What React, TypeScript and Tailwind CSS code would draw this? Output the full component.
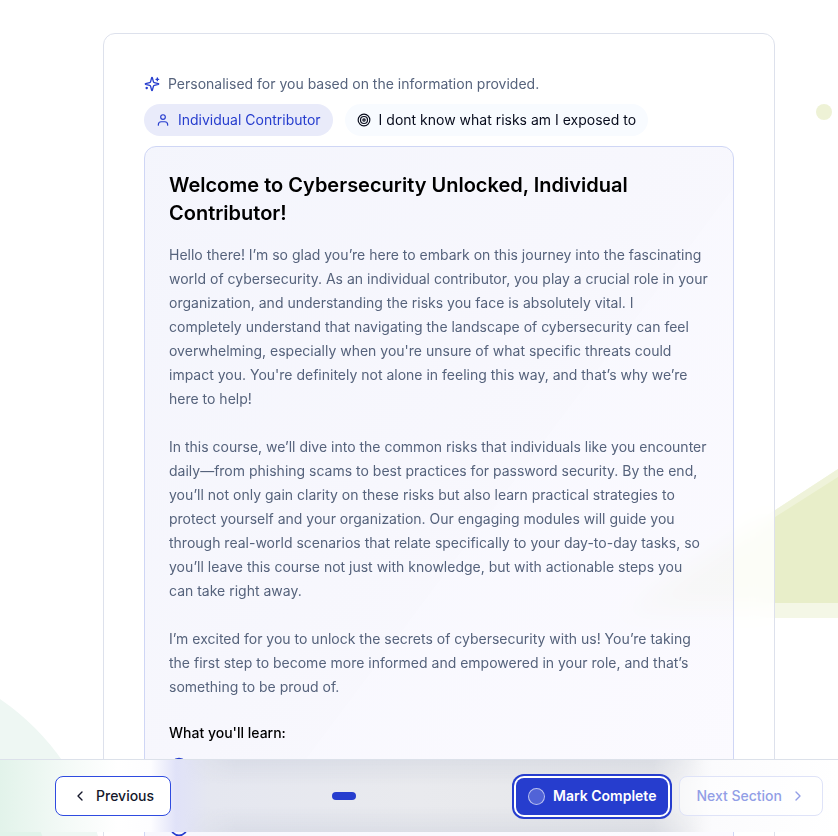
import { ChevronLeft, ChevronRight, Circle, Target } from 'lucide-react';

const paragraphs = [
  "Hello there! I’m so glad you’re here to embark on this journey into the fascinating world of cybersecurity. As an individual contributor, you play a crucial role in your organization, and understanding the risks you face is absolutely vital. I completely understand that navigating the landscape of cybersecurity can feel overwhelming, especially when you're unsure of what specific threats could impact you. You're definitely not alone in feeling this way, and that’s why we’re here to help!",
  'In this course, we’ll dive into the common risks that individuals like you encounter daily—from phishing scams to best practices for password security. By the end, you’ll not only gain clarity on these risks but also learn practical strategies to protect yourself and your organization. Our engaging modules will guide you through real-world scenarios that relate specifically to your day-to-day tasks, so you’ll leave this course not just with knowledge, but with actionable steps you can take right away.',
  'I’m excited for you to unlock the secrets of cybersecurity with us! You’re taking the first step to become more informed and empowered in your role, and that’s something to be proud of.',
];

function SparklesIcon() {
  return (
    <svg
      className="size-4 shrink-0 text-[#263dce]"
      viewBox="0 0 24 24"
      fill="none"
      stroke="currentColor"
      strokeWidth="2"
      strokeLinecap="round"
      strokeLinejoin="round"
      aria-hidden="true"
    >
      <path d="M9.937 15.5A2 2 0 0 0 8.5 14.063l-6.135-1.582a.5.5 0 0 1 0-.962L8.5 9.936A2 2 0 0 0 9.937 8.5l1.582-6.135a.5.5 0 0 1 .963 0L14.063 8.5A2 2 0 0 0 15.5 9.937l6.135 1.581a.5.5 0 0 1 0 .964L15.5 14.063a2 2 0 0 0-1.437 1.437l-1.582 6.135a.5.5 0 0 1-.963 0z" />
      <path d="M20 3v4" />
      <path d="M22 5h-4" />
      <path d="M4 17v2" />
      <path d="M5 18H3" />
    </svg>
  );
}

function UserIcon() {
  return (
    <svg
      className="size-[14px] shrink-0"
      viewBox="0 0 24 24"
      fill="none"
      stroke="currentColor"
      strokeWidth="2"
      strokeLinecap="round"
      strokeLinejoin="round"
      aria-hidden="true"
    >
      <path d="M20 21v-1a5 5 0 0 0-5-5H9a5 5 0 0 0-5 5v1" />
      <circle cx="12" cy="7" r="4" />
    </svg>
  );
}

function Backdrop() {
  return (
    <svg
      className="pointer-events-none absolute right-0 top-0 h-[836px] w-[838px]"
      viewBox="0 0 838 836"
      aria-hidden="true"
    >
      <circle cx="824" cy="112" r="8" fill="#eef2d6" />
      <path d="M838 469 L610 618 H838 Z" fill="#f4f7e6" />
      <path d="M838 469 L633 603 H838 Z" fill="#eff3da" />
      <path d="M838 477 L640 603 H838 Z" fill="#e8eec9" />
      <circle cx="-139" cy="902" r="246" fill="#eef7f3" />
      <circle cx="-139" cy="902" r="193" fill="#e1f3ea" />
    </svg>
  );
}

export default function App() {
  return (
    <div className="relative h-screen overflow-hidden bg-white font-['Inter',sans-serif] text-sm text-black">
      <Backdrop />

      <main className="relative ml-[103px] mr-[63px] mt-[33px] rounded-xl border border-[#dde1ec] bg-white/85 p-10 pb-24 backdrop-blur-md">
        <div className="flex items-center gap-2 text-[#56637c]">
          <SparklesIcon />
          <p className="leading-5">Personalised for you based on the information provided.</p>
        </div>

        <div className="mt-[10px] flex gap-3">
          <span className="flex h-8 items-center gap-2 rounded-full bg-[#e9ebfa] px-3 text-[#263dce]">
            <UserIcon />
            Individual Contributor
          </span>
          <span className="flex h-8 items-center gap-2 rounded-full bg-[#f8fbff] px-3 text-[#070b1c]">
            <Target size={14} />
            I dont know what risks am I exposed to
          </span>
        </div>

        <section className="mt-[10px] rounded-xl border border-[#cfd6f5] bg-linear-to-br from-[#263dce]/5 to-[#8b5cf6]/3 p-6 pb-24">
          <h1 className="text-xl font-semibold leading-7">
            Welcome to Cybersecurity Unlocked, Individual Contributor!
          </h1>
          <div className="mt-4 space-y-6 leading-6 text-[#56637c]">
            {paragraphs.map((text) => (
              <p key={text}>{text}</p>
            ))}
          </div>
          <h2 className="mt-6 font-medium leading-5">What you'll learn:</h2>
          <ul className="mt-[14px] space-y-10 text-[#263dce]">
            <li>
              <Circle size={20} />
            </li>
            <li>
              <Circle size={20} />
            </li>
          </ul>
        </section>
      </main>

      <footer className="fixed inset-x-0 bottom-1 flex h-[73px] items-center justify-between border-t border-[#dce1ea] bg-[linear-gradient(to_right,#e2f3ea,#f4faf7_8%,#ffffff_14%,#fdfdff_18%,#e0e2f8_21%,#e5e7f0_25%,#e9eaee_50%,#e6e7ea_78%,#fbfbfd_85%,#ffffff)] pl-[55px] pr-[15px]">
        {/* soft shade along the top and bottom edges of the middle part */}
        <div className="pointer-events-none absolute inset-y-0 left-[22%] right-[16%] bg-[linear-gradient(to_bottom,#b8bfd040,transparent_35%,transparent_65%,#b8bfd040)] mask-x-from-90%" />
        <button className="relative flex h-10 items-center gap-2 rounded-lg border border-[#2f4be0] bg-white px-4 font-medium text-[#14172a]">
          <ChevronLeft size={16} />
          Previous
        </button>
        <span className="relative h-2 w-6 rounded-full bg-[#263dce]" />
        <div className="relative flex items-center gap-[11px]">
          <button className="flex h-[37px] items-center gap-2 rounded-lg bg-[#263dce] px-3 font-semibold text-white ring-2 ring-[#263dce] ring-offset-2">
            <span className="size-[17px] rounded-full border border-white/60 bg-white/20" />
            Mark Complete
          </button>
          <button
            disabled
            className="flex h-10 items-center gap-2 rounded-lg border border-[#dfe3f8] bg-white/50 px-4 font-medium text-[#929ee6]"
          >
            Next Section
            <ChevronRight size={16} />
          </button>
        </div>
      </footer>
    </div>
  );
}
